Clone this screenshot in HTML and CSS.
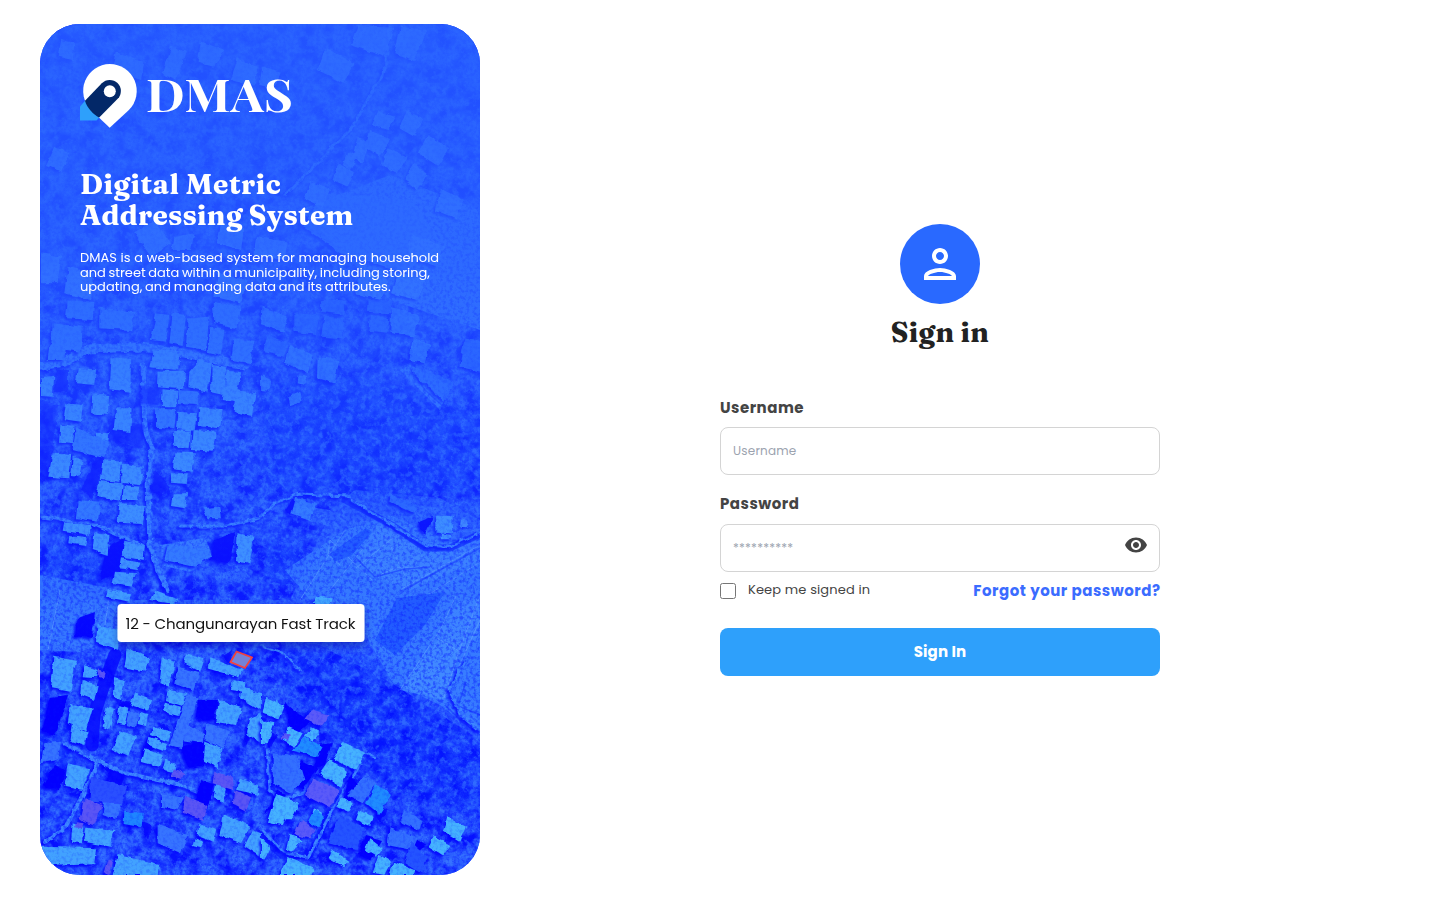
FILE: index.html
```html
<!DOCTYPE html>
<html lang="en">
<head>
<meta charset="utf-8">
<title>DMAS - Sign in</title>
<link rel="stylesheet" href="styles.css">
</head>
<body>
<div class="page">
  <aside class="hero">
    <svg class="map" viewBox="40 24 440 851" preserveAspectRatio="none" aria-hidden="true">
      <defs>
        <filter id="trees" x="0" y="0" width="100%" height="100%" color-interpolation-filters="sRGB">
          <feTurbulence type="fractalNoise" baseFrequency=".06" numOctaves="5" seed="8"/>
          <feColorMatrix values="0 0 0 0 .03  0 0 0 0 .07  0 0 0 0 1  3 0 0 0 -1.15"/>
          <feComposite in2="SourceAlpha" operator="in"/>
        </filter>
        <filter id="grain" x="0" y="0" width="100%" height="100%" color-interpolation-filters="sRGB">
          <feTurbulence type="fractalNoise" baseFrequency=".3" numOctaves="3" seed="3"/>
          <feColorMatrix values="0 0 0 0 .04  0 0 0 0 .1  0 0 0 0 1  3 0 0 0 -1.3"/>
        </filter>
        <filter id="glint" x="0" y="0" width="100%" height="100%" color-interpolation-filters="sRGB">
          <feTurbulence type="fractalNoise" baseFrequency=".15" numOctaves="4" seed="21"/>
          <feColorMatrix values="0 0 0 0 .25  0 0 0 0 .52  0 0 0 0 1  5 0 0 0 -2.3"/>
        </filter>
        <filter id="soft" x="-20%" y="-20%" width="140%" height="140%"><feGaussianBlur stdDeviation="12"/></filter>
        <filter id="edge" x="-5%" y="-5%" width="110%" height="110%" color-interpolation-filters="sRGB">
          <feTurbulence type="fractalNoise" baseFrequency=".12" numOctaves="2" seed="5" result="n"/>
          <feDisplacementMap in="SourceGraphic" in2="n" scale="5" xChannelSelector="R" yChannelSelector="G"/>
          <feDropShadow dx="-2" dy="2" stdDeviation=".8" flood-color="#0200ff" flood-opacity=".85"/>
        </filter>
        <filter id="lift" x="-10%" y="-30%" width="120%" height="190%"><feDropShadow dx="0" dy="4" stdDeviation="4" flood-color="#001080" flood-opacity=".45"/></filter>
        <linearGradient id="veil" x1="0" y1="0" x2="0" y2="1">
          <stop offset="0" stop-color="#2962ff" stop-opacity=".82"/>
          <stop offset=".28" stop-color="#2962ff" stop-opacity=".74"/>
          <stop offset=".52" stop-color="#2962ff" stop-opacity=".3"/>
          <stop offset=".76" stop-color="#2962ff" stop-opacity="0"/>
        </linearGradient>
      </defs>
      <rect x="40" y="24" width="440" height="851" fill="#2c60ff"/>

      <!-- tree cover -->
      <g filter="url(#trees)">
        <path d="M40 24H480V520L440 498 355 490 330 510 260 500 190 540 130 520 40 480Z"/>
        <path d="M40 475H170L250 505 325 525 290 600H40Z"/>
        <path d="M40 645 255 640 320 645 395 685 480 740V875H40V650Z"/>
      </g>

      <g fill="#0a18ff" filter="url(#soft)">
        <path opacity=".35" d="M260 385 360 375 480 410V490L370 500 270 490Z"/>
        <path opacity=".35" d="M275 650 370 655 480 745V820L390 790 290 700Z"/>
        <path opacity=".5" d="M40 540 100 560 120 590 50 580ZM60 700 40 740V790L80 770ZM270 540 310 540 290 590 260 580Z"/>
      </g>
      <rect x="40" y="24" width="440" height="851" filter="url(#glint)" opacity=".5"/>

      <!-- open fields -->
      <g fill="#3a80ff">
        <path d="M345 530 390 515 480 555V735L440 705 392 682 360 625 310 600 285 570Z" opacity=".85"/>
        <path d="M40 575 120 590 110 640 80 652 40 650Z" opacity=".75"/>
        <path d="M300 210 390 175 480 210V330L390 300Z"/>
        <path d="M160 545 205 538 213 556 190 572 164 566Z"/>
        <path d="M410 365 450 385 440 410 400 370Z"/>
      </g>
      <g fill="#4690ff">
        <path d="M378 523 410 535 425 560 375 577 357 558Z" opacity=".6"/>
        <path d="M437 640 459 651 444 700 400 690Z" opacity=".7"/>
        <path d="M459 602 479 598V635L456 658 438 632Z" opacity=".6"/>
        <path d="M415 556 480 540V560L410 590 376 577Z" opacity=".6"/>
      </g>
      <g fill="none" stroke="#65a5ff" stroke-width="1" opacity=".6">
        <path d="M330 540 372 580 M356 568 410 524 M375 577 395 568 430 567 M400 590 480 545 M420 600 480 562M437 638 459 651 444 698M459 651 479 598M400 690 440 630 457 594M330 540 328 555 340 565M110 590 105 625M60 590 48 650"/>
        <path d="M345 530 300 600M362 550 330 590M385 535 405 575M480 620 455 675"/>
      </g>
      <g fill="none" stroke="#1c40ff" stroke-width="1.5" opacity=".7">
        <path d="M355 557 375 577 405 569 430 567M404 590 440 570 480 548M410 368 425 390 445 408M445 705 462 722 480 735M480 715 458 706 466 682"/>
      </g>
      <path fill="#225cff" d="M331 553 366 528 372 532 352 555 334 562ZM397 598 445 592 425 625 395 655 375 640Z"/>

      <!-- roads -->
      <g fill="none" stroke-linecap="round" stroke-linejoin="round">
        <g stroke="#0618ff" stroke-width="7" opacity=".6">
          <path d="M345 500 392 525 425 548 450 548 480 534M260 836 283 856 310 855 330 812"/>
        </g>
        <path stroke="#0505ff" stroke-width="13" opacity=".8" d="M115 655 102 690 94 715 92 745"/>
        <g stroke="#3d86ff" filter="url(#edge)">
          <path stroke-width="9" d="M40 366 65 362 88 349 140 347 190 354 245 366"/>
          <path stroke-width="5" d="M143 365 145 430 152 450 148 480 150 545 158 570 168 590"/>
          <path stroke-width="3" d="M42 517 90 523 123 537 142 545M180 526 225 526 260 518 275 503 300 494 350 496"/>
          <path stroke-width="2.5" d="M352 500 392 524 425 545 450 547 480 532"/>
          <path stroke-width="4" d="M66 744 98 761 128 774 178 784 212 798M98 763 80 800 66 826 45 842"/>
          <path stroke-width="3" d="M261 829 283 852 308 858 332 810 360 765M267 745 270 790 280 800 304 792"/>
          <path stroke-width="2" d="M260 645 285 655 300 670M345 744 375 758"/>
          <path stroke-width="3" d="M390 24 385 70 350 130 285 195M480 730 462 715 450 690 465 660"/>
        </g>
      </g>
      <rect x="40" y="24" width="440" height="851" filter="url(#grain)" opacity=".38"/>

      <!-- building shadows -->
      <g fill="#0300ff" filter="url(#edge)">
        <path opacity=".6" d="M57 370H68V392H55ZM105 457H96L82 490 92 500ZM155 470 170 487 160 497 150 490Z"/>
        <path d="M108 547 125 538 120 572 100 580ZM215 540 235 532 230 563 210 560ZM78 618 95 612 92 638 75 636ZM50 697 68 695 55 735 42 732ZM198 700 218 700 214 720 196 718ZM180 745 205 742 205 765 188 768ZM202 780 215 785 205 815 195 800ZM55 765 65 770 60 790 42 787Z"/>
        <path d="M285 703 310 722 292 740ZM318 745 332 743 325 765 314 768ZM300 760 318 768 302 790 292 780ZM350 775 362 790 340 812ZM265 815 276 790 285 795ZM410 835 425 845 415 855ZM365 835 382 840 370 860 358 855ZM433 516 425 535 418 522ZM292 499 297 500 290 515 286 510Z"/>
        <path opacity=".4" d="M140 385 162 388 158 405 140 403ZM110 418 145 425 142 448 105 440ZM232 375 246 375 241 392 235 390ZM455 350 466 340 460 365ZM40 400 58 405 50 480 40 476Z"/>
        <path opacity=".7" d="M120 700 132 702 128 715 118 712ZM150 735 158 738 148 760 140 755ZM222 655 232 650 230 665ZM245 725 252 735 246 745ZM110 768 125 775 118 795 105 790ZM240 790 252 795 245 810ZM140 820 152 825 148 840ZM265 730 278 735 270 748ZM372 805 388 810 380 822Z"/>
      </g>

      <!-- rooftops, north-west quarter -->
      <g filter="url(#edge)">
        <g transform="translate(41 300) scale(.3333)" fill="#429aff">
          <path d="M335 150 415 150 412 210 325 202ZM350 212 432 212 428 268 348 262ZM445 215 475 180 510 190 500 275 442 262ZM512 195 560 200 548 288 510 280ZM560 215 600 220 582 306 545 300ZM365 268 410 272 405 322 362 322ZM585 270 645 280 632 348 578 335ZM475 320 545 328 538 385 470 378ZM412 335 465 340 458 392 408 388ZM225 325 272 325 268 396 218 390ZM400 390 450 392 446 445 398 440ZM455 390 525 395 515 455 450 450ZM400 457 462 460 455 515 396 508ZM390 520 440 520 437 552 390 548ZM395 580 438 580 432 625 390 618Z"/>
          <path d="M185 480 240 485 235 545 176 540ZM242 490 305 500 300 556 240 548ZM174 543 245 550 240 602 166 592ZM248 555 295 560 288 600 245 600ZM35 460 90 465 85 535 22 530ZM95 470 125 480 115 530 90 528ZM155 280 205 285 200 345 150 340ZM75 310 125 315 120 365 68 358ZM212 172 270 176 268 275 205 268ZM110 205 165 208 160 255 105 250ZM0 235 40 230 35 290 0 288ZM58 375 100 380 96 432 54 428ZM165 398 206 400 202 422 165 420ZM235 610 315 615 305 672 230 668ZM70 665 150 675 145 705 65 692ZM85 705 140 712 135 738 82 730ZM160 700 205 705 200 765 155 750ZM250 722 312 735 308 780 242 770ZM240 775 295 785 288 810 235 802ZM222 815 285 820 272 860 215 852ZM590 700 640 710 625 790 585 780Z"/>
          <path fill="#367fff" d="M345 40 385 45 375 125 330 120ZM395 40 435 45 425 138 385 130ZM440 55 505 50 495 150 435 140ZM510 80 550 90 540 165 500 155ZM580 115 640 125 630 190 570 180ZM515 5 600 20 590 85 520 70ZM35 70 125 80 120 155 30 145ZM175 20 280 40 270 90 175 85ZM80 5 160 5 155 60 75 55ZM25 135 75 140 70 180 20 180ZM105 385 205 425 190 475 95 450ZM410 270 475 275 470 315 410 312ZM380 735 500 745 510 770 460 800 370 780ZM110 600 178 605 170 665 105 655ZM345 325 405 330 400 385 345 380ZM485 625 535 620 540 655 500 655Z"/>
        </g>
      </g>
      <!-- rooftops, north-east quarter -->
      <g filter="url(#edge)" opacity=".8">
        <g transform="translate(261 300) scale(.3333)" fill="#3c8cff">
          <path d="M5 20 80 50 68 95 0 75ZM85 135 155 165 140 220 75 190ZM170 170 235 180 220 250 168 235ZM390 20 475 45 460 110 388 95ZM455 115 505 130 495 190 445 180ZM105 593 165 612 148 660 92 640ZM0 225 30 240 22 272 0 270ZM80 290 118 275 125 305 85 318ZM112 226 135 230 130 255 110 250Z"/>
          <path fill="#2f70ff" d="M20 105 80 130 70 170 5 155ZM320 0 395 0 388 40 318 35ZM330 45 385 55 380 98 325 92ZM190 50 250 55 245 115 180 110ZM460 200 580 245 550 305 455 215ZM610 115 660 125 660 215 595 200ZM180 0 255 0 250 45 180 35ZM390 585 470 615 460 640 385 605ZM100 40 175 45 165 105 100 95Z"/>
          <path fill="#49a8ff" d="M525 647 575 648 573 700 527 698ZM540 700 570 705 568 718 538 718Z"/>
          <circle cx="610" cy="670" r="12" fill="#4b9dff"/>
        </g>
      </g>
      <!-- rooftops, south-west quarter -->
      <g filter="url(#edge)">
        <g transform="translate(41 590) scale(.3333)" fill="#42a2ff">
          <path d="M40 200 105 212 88 305 30 295ZM130 225 170 240 165 265 125 262ZM125 270 170 285 160 330 120 315ZM170 105 232 120 232 180 165 155ZM260 175 325 205 312 245 250 232ZM365 205 402 215 385 290 355 280ZM435 190 490 205 478 245 430 220ZM505 205 605 240 595 262 500 235ZM575 270 612 275 605 305 570 300ZM605 290 660 310 660 360 600 325ZM380 298 435 312 425 348 375 332ZM375 338 420 350 412 378 365 365ZM278 310 330 330 322 362 268 345ZM235 345 262 355 252 405 228 400ZM297 365 322 372 315 408 290 402ZM535 330 602 355 585 405 523 395ZM490 455 545 475 530 535 485 510ZM625 385 660 370 660 460 615 430ZM90 345 155 355 135 420 80 400ZM95 405 140 425 130 468 88 455ZM235 420 285 440 262 500 215 480ZM335 410 392 425 382 455 330 435ZM325 440 382 460 372 485 320 465ZM310 475 365 495 355 530 300 515ZM370 508 405 520 398 550 362 540ZM220 260 252 270 240 330 215 320ZM195 350 222 360 205 420 185 410ZM80 520 145 535 125 600 70 590Z"/>
          <path d="M595 565 655 585 650 615 588 600ZM525 582 555 590 548 635 518 622ZM550 670 628 710 600 760 535 735ZM635 720 660 730 660 800 610 768ZM475 700 525 720 515 755 470 738ZM460 745 490 755 480 775 455 768ZM230 795 355 822 350 855H215ZM0 770 165 775 160 820 15 825 0 790ZM135 710 220 720 210 770 130 755ZM95 700 130 710 122 760 90 755ZM200 0 270 10 265 35 195 20ZM340 0 410 25 400 42 325 30Z"/>
          <path fill="#3674ff" d="M410 228 475 250 460 300 400 282ZM262 362 295 372 285 412 255 405ZM495 400 570 420 545 475 490 450ZM435 320 470 325 420 475 385 465ZM350 705 440 735 420 790 350 760ZM430 400 490 430 485 460 420 450ZM10 460 60 455 50 510 0 520ZM360 610 430 620 410 660 360 650ZM190 620 240 640 225 690 185 675Z"/>
          <path fill="#2a50ff" d="M150 560 260 590 240 640 145 635Z"/>
          <path fill="#5a55f4" d="M435 620 500 645 490 690 425 665ZM580 600 630 622 615 665 575 645ZM520 545 575 560 580 600 515 580ZM130 625 185 645 155 705 115 690ZM172 235 195 242 188 265 170 260ZM395 535 430 550 420 570 390 560ZM105 697 128 700 122 715 102 712ZM200 810 218 808 205 855 188 850Z"/>
          <path fill="#1e86ff" d="M250 665 305 672 302 712 248 702Z"/>
        </g>
      </g>
      <!-- rooftops, south-east quarter -->
      <g filter="url(#edge)">
        <g transform="translate(261 590) scale(.3333)" fill="#45b2ff">
          <path d="M245 455 315 490 285 540 218 508ZM205 508 262 545 240 590 175 550ZM45 612 115 640 95 685 75 685 65 705 18 695ZM0 390 40 400 20 460 0 460ZM15 320 72 345 55 390 5 370ZM150 412 175 425 155 452 132 440ZM80 410 125 430 100 470 65 452ZM85 732 125 750 105 770 95 785 75 778ZM80 800 160 835 150 855H55ZM210 778 265 812 250 832 200 805ZM355 795 390 815 370 855 335 848ZM400 815 460 840 455 855H385ZM560 680 615 710 595 755 545 725ZM515 735 568 765 545 800 500 772ZM325 745 365 775 345 800 312 780ZM295 660 338 680 325 708 285 690ZM155 655 190 668 182 682 152 672ZM0 745 30 770 10 810 0 800ZM165 20 215 25 205 42 155 42ZM240 620 275 640 262 665 228 650Z"/>
          <path fill="#3370ff" d="M310 560 345 578 305 640 255 615ZM385 715 470 745 455 780 380 765ZM35 490 110 500 130 570 90 610 35 580ZM430 660 485 690 475 720 415 695Z"/>
          <path fill="#2454ff" d="M235 680 310 710 290 780 200 760ZM450 755 500 800 480 850 430 820Z"/>
          <path fill="#5a5af8" d="M155 565 235 600 205 655 132 615ZM150 360 205 378 180 410 130 388ZM120 688 165 720 145 745 100 735ZM68 428 88 435 80 455 62 448Z"/>
          <path fill="#1f8cff" d="M345 580 390 615 355 672 315 640ZM160 660 190 675 172 712 142 695ZM130 440 185 470 170 500 95 482Z"/>
        </g>
      </g>

      <!-- roofs under the copy block -->
      <g filter="url(#edge)" opacity=".8">
        <g transform="translate(41 20) scale(.3333)" fill="#4a9cff">
          <path fill="#3a80ff" d="M840 520 1120 540 1180 640 1100 760 900 700 790 620Z"/>
          <path d="M390 80 435 95 405 180 365 165ZM480 65 550 90 520 140 470 125ZM590 115 650 140 640 200 570 180ZM665 140 720 155 700 205 655 195ZM855 85 940 130 910 190 830 150ZM950 15 1060 20 1030 110 930 75ZM1080 20 1160 30 1120 120 1060 100ZM225 95 310 125 300 180 210 150ZM60 60 100 70 95 120 50 110ZM985 330 1050 360 1020 410 970 380ZM950 350 985 370 965 430 935 410ZM1095 270 1145 295 1120 350 1075 325ZM1160 345 1225 385 1195 440 1130 400ZM1040 385 1100 410 1070 460 1020 435ZM1120 430 1160 465 1130 510 1090 480ZM1010 270 1060 290 1040 330 990 315ZM920 395 950 410 930 450 905 435ZM810 485 870 510 845 560 790 535ZM890 430 940 455 920 500 875 480ZM1200 505 1270 540 1245 595 1185 570ZM280 640 340 600 390 670 330 710ZM400 650 460 640 450 690 395 690ZM540 610 610 625 600 690 530 670ZM645 650 740 665 730 720 640 705ZM965 750 1045 780 1020 840 940 820ZM1070 760 1150 780 1130 840 1050 820ZM40 380 85 400 60 455 15 435ZM0 700 60 710 50 790 0 790ZM80 740 160 760 150 840 70 820ZM530 760 620 780 600 850 520 830ZM1110 640 1210 680 1190 740 1100 710Z"/>
        </g>
      </g>
      <rect x="40" y="24" width="440" height="851" filter="url(#grain)" opacity=".2"/>
      <rect x="40" y="24" width="440" height="851" fill="url(#veil)"/>

      <!-- selected parcel and its label -->
      <path d="M236.500 651.500 252 657.500 245 668 230.500 662Z" fill="#7382d8" stroke="#f5413d" stroke-width="1.8"/>
      <rect x="117.500" y="604" width="247" height="38" rx="4" fill="#fff" filter="url(#lift)"/>
      <text class="map-label" x="125.500" y="628.500" textLength="230" lengthAdjust="spacing">12 - Changunarayan Fast Track</text>
    </svg>

    <div class="hero-copy">
      <svg class="logo" viewBox="80 64 214 64" role="img" aria-label="DMAS">
        <path fill="#fff" d="M109.700 64a27 27 0 0 1 19.200 46L109.700 127.800 91 110A27 27 0 0 1 109.700 64Z"/>
        <path fill="#2ea0fb" d="M80 106.500 85.200 100.500 99.200 117.500 96.500 120.500H80Z"/>
        <path fill="#032868" d="M85 100.700 101.800 83.300A11.100 11.100 0 0 1 117.700 98.800L99.200 117.600C93 114 87 108 85 100.700Z"/>
        <circle cx="109.800" cy="91.200" r="6" fill="#fff"/>
        <text class="logo-name" x="146" y="111.500" textLength="147" lengthAdjust="spacingAndGlyphs">DMAS</text>
      </svg>
      <h1 class="hero-title"><span class="title-top">Digital Metric</span><br>Addressing System</h1>
      <p class="hero-text">DMAS is a web-based system for managing household <span class="tight">and street data within a municipality, including storing,</span> <span class="snug">updating, and managing data and its attributes.</span></p>
    </div>
  </aside>

  <main class="main">
    <form class="form">
      <div class="avatar">
        <svg viewBox="0 0 24 24" width="48" height="48" fill="#fff"><path d="M12 6c1.100 0 2 .9 2 2s-.9 2-2 2-2-.9-2-2 .9-2 2-2m0 10c2.700 0 5.800 1.290 6 2H6c.23-.72 3.310-2 6-2m0-12C9.790 4 8 5.790 8 8s1.790 4 4 4 4-1.790 4-4-1.790-4-4-4zm0 10c-2.670 0-8 1.340-8 4v2h16v-2c0-2.660-5.330-4-8-4z"/></svg>
      </div>
      <h2 class="form-title">Sign in</h2>
      <label class="label" for="user">Username</label>
      <div class="field"><input class="input" id="user" type="text" placeholder="Username"></div>
      <label class="label label-pass" for="pass">Password</label>
      <div class="field">
        <input class="input input-pass" id="pass" type="password" placeholder="**********">
        <svg class="eye" viewBox="0 0 24 24" width="24" height="24" fill="#444"><path d="M12 4.500C7 4.500 2.730 7.610 1 12c1.730 4.390 6 7.500 11 7.500s9.270-3.110 11-7.500c-1.730-4.390-6-7.500-11-7.500zM12 17c-2.760 0-5-2.240-5-5s2.240-5 5-5 5 2.240 5 5-2.240 5-5 5zm0-8c-1.660 0-3 1.340-3 3s1.340 3 3 3 3-1.340 3-3-1.340-3-3-3z"/></svg>
      </div>
      <div class="options">
        <label class="keep"><input class="check" type="checkbox"><span class="keep-text">Keep me signed in</span></label>
        <a class="forgot">Forgot your password?</a>
      </div>
      <button class="submit" type="button">Sign In</button>
    </form>
  </main>
</div>
</body>
</html>
```
FILE: styles.css
```css
* { box-sizing: border-box; }
body { margin: 0; background: #fff; font-family: Poppins, Inter, "Open Sans", sans-serif; color: #444; }
h1, h2, p { margin: 0; }
.page { display: flex; height: 900px; padding: 0 40px; overflow: hidden; }

.hero { position: relative; width: 440px; height: 851px; margin-top: 24px; border-radius: 40px; overflow: hidden; background: #2858ff; }
.map { position: absolute; inset: 0; width: 440px; height: 851px; }
.map-label { font-size: 15px; fill: #111; }
.hero-copy { position: relative; padding: 40px 40px 0 40px; color: #fff; }
.logo { display: block; width: 214px; height: 64px; overflow: visible; }
.logo-name { font: 700 45px "Playfair Display", "Bodoni Moda", "DM Serif Display", Fraunces, "Liberation Serif", serif; fill: #fff; }
.hero-title { margin-top: 41px; font: 700 28px/31px Fraunces, "Liberation Serif", serif; white-space: nowrap; letter-spacing: .25px; }
.title-top { letter-spacing: .5px; }
.hero-text { margin-top: 20px; font-size: 13px; line-height: 14.500px; word-spacing: .3px; }
.tight { word-spacing: -.9px; }
.snug { word-spacing: -.7px; }

.main { flex: 1; display: flex; align-items: center; justify-content: center; }
.form { display: flex; flex-direction: column; width: 440px; height: 452px; }
.avatar { display: flex; align-items: center; justify-content: center; align-self: center; width: 80px; height: 80px; border-radius: 50%; background: #2969ff; }
.form-title { margin-top: 12px; text-align: center; font: 700 28px/32px Fraunces, "Liberation Serif", serif; letter-spacing: .3px; color: #222; }
.label { margin-top: 48px; font-size: 15px; line-height: 24px; font-weight: 700; letter-spacing: .5px; }
.label-pass { margin-top: 17px; }
.field { display: flex; align-items: center; height: 48px; margin-top: 7px; padding: 0 11px 0 12px; border: 1px solid #d4d4d4; border-radius: 8px; }
.label-pass + .field { margin-top: 8px; }
.input { flex: 1; min-width: 0; height: 40px; padding: 0; border: 0; outline: 0; background: none; font: 12px Poppins, Inter, sans-serif; letter-spacing: .2px; }
.input::placeholder { color: #9ca3af; opacity: 1; }
.eye { margin-bottom: 6px; }
.options { display: flex; align-items: center; justify-content: space-between; height: 24px; margin-top: 7px; }
.keep { display: flex; align-items: center; gap: 12px; font-size: 13px; letter-spacing: .13px; }
.keep-text { margin-top: -2px; }
.check { width: 16px; height: 16px; margin: 0; }
.forgot { margin: -2px -.5px 0 0; font-size: 15px; font-weight: 700; letter-spacing: .52px; color: #3b6cff; }
.submit { height: 48px; margin-top: 25px; padding-bottom: 3px; border: 0; border-radius: 8px; background: #2ea0fb; color: #fff; font: 700 15px Poppins, Inter, sans-serif; letter-spacing: .15px; }
```
